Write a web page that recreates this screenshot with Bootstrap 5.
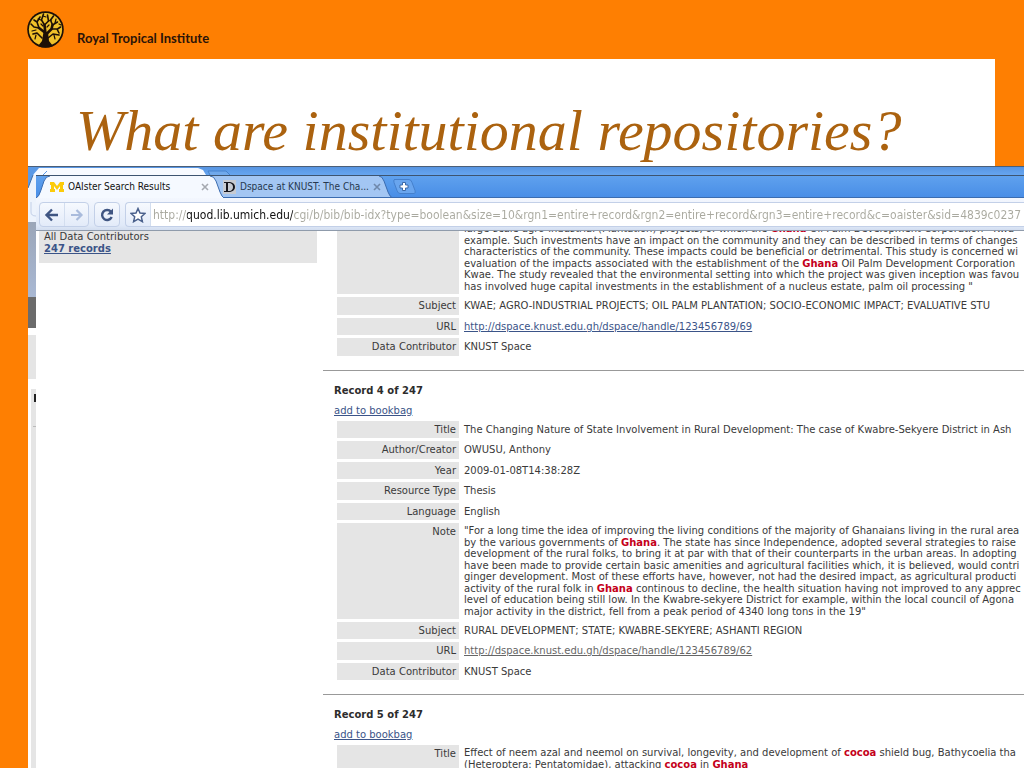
<!DOCTYPE html>
<html lang="en">
<head>
<meta charset="utf-8">
<meta name="viewport" content="width=device-width, initial-scale=1">
<title>What are institutional repositories?</title>
<link rel="stylesheet" href="https://cdn.jsdelivr.net/npm/bootstrap@5.3.0/dist/css/bootstrap.min.css">
<style>
  body { background: #fe7f02; font: 10px/12px "DejaVu Sans", sans-serif; color: #3a3a3a; }
  svg { display: block; flex: none; }

  /* slide */
  .brand-row { height: 59px; padding: 11px 0 0 27px; gap: 13px; }
  .brand-name { font: bold 13px/16px Lato, sans-serif; color: #2b1408; padding-top: 19px; }
  .slide-title { margin: 0 29px 0 28px; padding: 40px 0 3px 48px; background: #fff; }
  .slide-title h1 { font: italic 58px/64px "Liberation Serif", serif; color: #ab620f; white-space: nowrap; }

  /* rear browser window, only its rim shows */
  .rear { margin-left: 28px; background: #fff; border-top: 1px solid #4b5f78; min-height: 0; }
  .rear-top { height: 8px; flex: none; background: linear-gradient(#5795e2, #66a5f0); }
  .rear-side { width: 8px; flex: none; }
  .side-photo { height: 75px; background: linear-gradient(#9ba6b8, #a9b8d3); }
  .side-dark { height: 31px; background: #6b6b6b; margin-bottom: 7px; }
  .side-grey { height: 44px; background: #e5e5e5; margin-bottom: 10px; }
  .side-list { margin-left: 3px; background: #e5e5e5; padding-top: 5px; }
  .side-mark { width: 2px; height: 8px; margin-left: 3px; background: #222; margin-bottom: 24px; }
  .side-rule { height: 1px; margin-left: 2px; background: #bbb; }

  /* front browser window */
  .front { min-width: 0; border-top: 1px solid #3d5470; }
  .tab-strip { height: 22px; flex: none; background: linear-gradient(#5fa1ee, #488de6); box-shadow: inset 0 -1px #3b6cb0; }
  .tab-item { height: 22px; font: 10px/22px "DejaVu Sans Condensed", sans-serif; gap: 4px; }
  .tab-item button { font: inherit; border: 0; background: none; padding: 0; color: #111; white-space: nowrap; }
  .tab-shape { position: absolute; inset: 0; width: 100%; height: 100%; }
  .tab-item > :not(.tab-shape) { position: relative; }
  .tab-one { width: 188px; padding: 0 15px 0 14px; z-index: 1; }
  .tab-two { width: 181px; margin-left: -12px; padding: 0 16px 0 11px; z-index: 0; }
  .tab-item.tab-two button { color: #26384f; }
  .new-tab { border: 0; background: none; padding: 3px 0 0; }
  .tool-row { height: 33px; flex: none; padding: 4px 0 3px 3px; gap: 5px; background: linear-gradient(#f3f7fe, #e0e9f8 85%, #d3def0); border-bottom: 1px solid #8f9bab; }
  .tool-box { border: 1px solid #c3d0e8; border-radius: 4px; background: linear-gradient(#f6f9fe, #e3ebf9); }
  .tool-box button { border: 0; background: none; padding: 4px; width: 24px; }
  .tool-box button + button { border-left: 1px solid #d3deef; }
  .address { min-width: 0; border-right: 0; border-radius: 4px 0 0 4px; overflow: hidden; }
  .address input {
    border: 0; outline: 0; min-width: 0; padding: 0 0 0 2px;
    font: 12px/22px "DejaVu Sans Condensed", sans-serif;
    background: linear-gradient(90deg, #a9a99f 36px, #101010 36px, #101010 142px, #a9a99f 142px);
    -webkit-background-clip: text; background-clip: text; -webkit-text-fill-color: transparent;
  }
  .address-field { background: #fff; border-left: 1px solid #d3deef; min-width: 0; }

  /* search results page */
  .page-view { background: #fff; }
  .facets { width: 278px; height: 32px; margin: 0 6px 0 3px; padding: 0 5px; background: #e5e5e5; flex: none; }
  a { color: #3b5488; }
  .facets a { font-weight: bold; }
  .results { min-width: 0; overflow: hidden; white-space: nowrap; }
  .scrolled { margin-top: -13px; }
  .record-table { border-collapse: separate; border-spacing: 0 3px; margin-left: 14px; }
  .record-table th { width: 122px; min-width: 122px; height: 17px; padding: 3px 3px 0 0; background: #e5e5e5; font-weight: normal; text-align: right; vertical-align: top; }
  .record-table td { padding: 3px 0 0 5px; vertical-align: top; }
  .record-table tr:nth-child(even) th { height: 18px; }
  .record-table .long-text { padding: 2px 0 2px 5px; }
  .long-text span { display: block; }
  .long-text span:nth-child(even) { line-height: 11px; }
  .long-text b { color: #c4001a; }
  .record-rule { margin: 11px 0 13px; border: 0; border-top: 1px solid #999; opacity: 1; }
  .results h2 { font: bold 10px/14px "DejaVu Sans", sans-serif; margin: 0 0 6px 11px; color: #2c2c2c; }
  .bag-link { display: block; width: max-content; line-height: 14px; margin-left: 11px; }
  .visited { color: #666; }
</style>
</head>
<body class="vh-100 overflow-hidden d-flex flex-column">

<header class="brand-row d-flex align-items-start flex-shrink-0">
  <svg width="37" height="37" viewBox="0 0 37 37" aria-hidden="true">
    <circle cx="18.500" cy="18.500" r="18.300" fill="#1d1007"/>
    <circle cx="18.500" cy="18.500" r="16.600" fill="#f0c12a"/>
    <g fill="none" stroke="#1d1007" stroke-linecap="round" stroke-linejoin="round">
      <path stroke-width="2.600" d="M18.500 34V22L12 17M18.500 24l6-6 1-4M18.500 23l-1-9"/>
      <path stroke-width="1.600" d="M12 17L7 16l-3-3M12 17l-2-6 3-5M17.500 14l-3-5 2-6M17.500 14l4-4-1-6M25.500 14l-2-5 3-4M25.500 14l5-3M24.500 18l6 0 3-2M15 27l-5-5-4 1M21 27l5-4 6 1M30 18l2 4M10 11L7 9"/>
      <path stroke-width="1.200" d="M14 9l-3-1M21.500 10l3-1M9 19l-4 1M20 16l2-2M9 24l-1 4M27 24l1 4M28 12l1-4M14 13l2 2M16 5l3 1M32 13l2 1"/>
    </g>
    <path fill="#1d1007" d="M16.500 21h4.500l1 9 4 5c-5 2-10 2-15 0l4-5z"/>
  </svg>
  <span class="brand-name">Royal Tropical Institute</span>
</header>

<section class="slide-title flex-shrink-0">
  <h1 class="m-0">What are institutional repositories?</h1>
</section>

<main class="rear flex-grow-1 d-flex flex-column overflow-hidden">
  <div class="rear-top">
    <svg width="210" height="8" viewBox="0 0 210 8" aria-hidden="true">
      <path d="M5 8L11 1H170L175 3L178 8z" fill="#f7faff"/>
      <path d="M0 8V0H9L5 8z" fill="#5a99e6"/>
      <path d="M15 8l4-4" stroke="#5a99e6" fill="none"/>
      <path d="M182 8l-2-4h18l4 4" stroke="#4682cc" fill="#70a9ec"/>
    </svg>
  </div>
  <div class="d-flex flex-grow-1 overflow-hidden">
    <div class="rear-side d-flex flex-column" aria-hidden="true">
      <svg width="8" height="47" viewBox="0 0 8 47">
        <path d="M0 0h8v47H0z" fill="#edf3fc"/>
        <path d="M0 0h5L0 13z" fill="#5a99e6"/>
        <path d="M5 0L0 13" stroke="#3d6ea9"/>
        <path d="M3 27v10q0 4 5 4" stroke="#c3d0e8" fill="none"/>
      </svg>
      <div class="side-photo"></div>
      <div class="side-dark"></div>
      <div class="side-grey"></div>
      <div class="side-list flex-grow-1"><div class="side-mark"></div><div class="side-rule"></div></div>
    </div>

    <div class="front flex-grow-1 d-flex flex-column">
      <div class="tab-strip d-flex">
        <div class="tab-item tab-one position-relative d-flex align-items-center">
          <svg class="tab-shape" viewBox="0 0 188 22" preserveAspectRatio="none" aria-hidden="true"><path d="M0 22Q3 21 5 14L8 5Q10 0 14 0H174Q178 0 180 5L184 16Q186 21 188 22z" fill="#f5f9ff"/><path d="M0 22Q3 21 5 14L8 5Q10 0 14 0M174 0Q178 0 180 5L184 16Q186 21 188 22" fill="none" stroke="#3b6cb0"/></svg>
          <svg width="14" height="12" viewBox="0 0 14 12" aria-hidden="true"><path d="M0 1h4l3 4 3-4h4v3h-1v4h1v3H9V8h1V5L7 9 4 5v3h1v3H0V8h1V4H0z" fill="#fccb0a"/></svg>
          <button type="button">OAIster Search Results</button>
          <button type="button" class="ms-auto" aria-label="Close tab"><svg width="8" height="8" viewBox="0 0 8 8"><path d="M1 1l6 6M7 1L1 7" stroke="#a5a9b0" stroke-width="1.600"/></svg></button>
        </div>
        <div class="tab-item tab-two position-relative d-flex align-items-center">
          <svg class="tab-shape" viewBox="0 0 181 22" preserveAspectRatio="none" aria-hidden="true"><path d="M0 0H167Q170 0 172 5L176 16Q178 21 180 21H10z" fill="#a3c6f3"/><path d="M167 0Q170 0 172 5L176 16Q178 21 180 21.500H8" fill="none" stroke="#3b6cb0"/></svg>
          <svg width="13" height="14" viewBox="0 0 13 14" aria-hidden="true"><path d="M0 0h13v14H0z" fill="#c7cbd2"/><path d="M1 2h6q5 1 5 5t-5 5H1v-1h2V3H1zM5 3v8h2q3-1 3-4T7 3z" fill="#15151c" fill-rule="evenodd"/></svg>
          <button type="button">Dspace at KNUST: The Cha...</button>
          <button type="button" class="ms-auto" aria-label="Close tab"><svg width="8" height="8" viewBox="0 0 8 8"><path d="M1 1l6 6M7 1L1 7" stroke="#6f88ab" stroke-width="1.600"/></svg></button>
        </div>
        <button type="button" class="new-tab d-flex align-items-start" aria-label="New tab">
          <svg width="24" height="15" viewBox="0 0 24 15"><path d="M1 .5h15q2 0 3 3l3 8q1 3-1 3H7q-2 0-3-3L1 3.500Q0 .5 2 .5z" fill="#69a5ee" stroke="#4580cc"/><path d="M9.500 3.500h3v2.500h2.500v3h-2.500v2.500h-3V9H7V6h2.500z" fill="#fff" stroke="#3a69a8"/></svg>
        </button>
      </div>

      <div class="tool-row d-flex">
        <div class="tool-box d-flex">
          <button type="button" aria-label="Back"><svg width="16" height="16" viewBox="0 0 16 16"><path d="M14 8H3M8 2.500L2.500 8 8 13.500" fill="none" stroke="#3f5582" stroke-width="2.400"/></svg></button>
          <button type="button" aria-label="Forward"><svg width="16" height="16" viewBox="0 0 16 16"><path d="M2 8h10M7.500 3l5 5-5 5" fill="none" stroke="#a9bbdc" stroke-width="2.200"/></svg></button>
        </div>
        <div class="tool-box d-flex">
          <button type="button" aria-label="Reload"><svg width="16" height="16" viewBox="0 0 16 16"><path d="M12 4.800A5 5 0 1 0 12.700 10" fill="none" stroke="#3f5582" stroke-width="2.400"/><path d="M14 1.500v6H8z" fill="#3f5582"/></svg></button>
        </div>
        <div class="tool-box address d-flex flex-grow-1">
          <button type="button" aria-label="Bookmark"><svg width="16" height="16" viewBox="0 0 16 16"><path d="M8 1.500l2 4.500 5 .5-3.700 3.300 1.100 4.900L8 12.200l-4.400 2.500 1.100-4.900L1 6.500 6 6z" fill="#fff" stroke="#4a608c" stroke-width="1.500"/></svg></button>
          <div class="address-field flex-grow-1 d-flex">
            <input type="text" class="w-100" aria-label="Address" value="http://quod.lib.umich.edu/cgi/b/bib/bib-idx?type=boolean&amp;size=10&amp;rgn1=entire+record&amp;rgn2=entire+record&amp;rgn3=entire+record&amp;c=oaister&amp;sid=4839c0237">
          </div>
        </div>
      </div>

      <div class="page-view d-flex flex-grow-1 overflow-hidden">
        <aside class="facets">
          <div>All Data Contributors</div>
          <a href="#">247 records</a>
        </aside>
        <div class="results flex-grow-1">
          <article class="scrolled">
            <table class="record-table">
              <tr><th scope="row"></th><td class="long-text"><span>large-scale agro-industrial (Plantation) projects, of which the <b>Ghana</b> Oil Palm Development Corporation - Kwa</span><span>example. Such investments have an impact on the community and they can be described in terms of changes</span><span>characteristics of the community. These impacts could be beneficial or detrimental. This study is concerned wi</span><span>evaluation of the impacts associated with the establishment of the <b>Ghana</b> Oil Palm Development Corporation</span><span>Kwae. The study revealed that the environmental setting into which the project was given inception was favou</span><span>has involved huge capital investments in the establishment of a nucleus estate, palm oil processing "</span></td></tr>
              <tr><th scope="row">Subject</th><td>KWAE; AGRO-INDUSTRIAL PROJECTS; OIL PALM PLANTATION; SOCIO-ECONOMIC IMPACT; EVALUATIVE STU</td></tr>
              <tr><th scope="row">URL</th><td><a href="#">http://dspace.knust.edu.gh/dspace/handle/123456789/69</a></td></tr>
              <tr><th scope="row">Data Contributor</th><td>KNUST Space</td></tr>
            </table>
          </article>
          <hr class="record-rule">
          <article>
            <h2>Record 4 of 247</h2>
            <a class="bag-link" href="#">add to bookbag</a>
            <table class="record-table">
              <tr><th scope="row">Title</th><td>The Changing Nature of State Involvement in Rural Development: The case of Kwabre-Sekyere District in Ash</td></tr>
              <tr><th scope="row">Author/Creator</th><td>OWUSU, Anthony</td></tr>
              <tr><th scope="row">Year</th><td>2009-01-08T14:38:28Z</td></tr>
              <tr><th scope="row">Resource Type</th><td>Thesis</td></tr>
              <tr><th scope="row">Language</th><td>English</td></tr>
              <tr><th scope="row">Note</th><td class="long-text"><span>"For a long time the idea of improving the living conditions of the majority of Ghanaians living in the rural area</span><span>by the various governments of <b>Ghana</b>. The state has since Independence, adopted several strategies to raise</span><span>development of the rural folks, to bring it at par with that of their counterparts in the urban areas. In adopting</span><span>have been made to provide certain basic amenities and agricultural facilities which, it is believed, would contri</span><span>ginger development. Most of these efforts have, however, not had the desired impact, as agricultural producti</span><span>activity of the rural folk in <b>Ghana</b> continous to decline, the health situation having not improved to any apprec</span><span>level of education being still low. In the Kwabre-sekyere District for example, within the local council of Agona</span><span>major activity in the district, fell from a peak period of 4340 long tons in the 19"</span></td></tr>
              <tr><th scope="row">Subject</th><td>RURAL DEVELOPMENT; STATE; KWABRE-SEKYERE; ASHANTI REGION</td></tr>
              <tr><th scope="row">URL</th><td><a class="visited" href="#">http://dspace.knust.edu.gh/dspace/handle/123456789/62</a></td></tr>
              <tr><th scope="row">Data Contributor</th><td>KNUST Space</td></tr>
            </table>
          </article>
          <hr class="record-rule">
          <article>
            <h2>Record 5 of 247</h2>
            <a class="bag-link" href="#">add to bookbag</a>
            <table class="record-table">
              <tr><th scope="row">Title</th><td class="long-text"><span>Effect of neem azal and neemol on survival, longevity, and development of <b>cocoa</b> shield bug, Bathycoelia tha</span><span>(Heteroptera: Pentatomidae), attacking <b>cocoa</b> in <b>Ghana</b></span></td></tr>
            </table>
          </article>
        </div>
      </div>
    </div>
  </div>
</main>
<script src="https://cdn.jsdelivr.net/npm/bootstrap@5.3.0/dist/js/bootstrap.bundle.min.js"></script>
</body>
</html>
